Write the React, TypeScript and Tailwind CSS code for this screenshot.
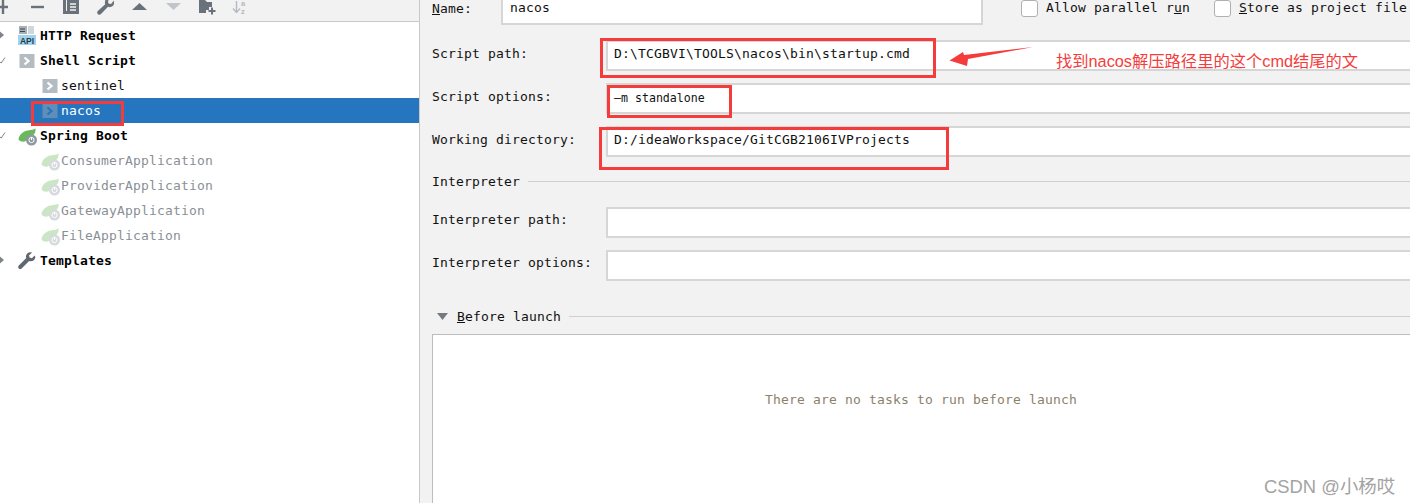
import type { ReactNode } from "react";

const mono = "font-['DejaVu_Sans_Mono',monospace] text-[13px] tracking-[0.17px]";

function ShellIcon({ selected }: { selected?: boolean }) {
  return (
    <svg width="16" height="16" viewBox="0 0 16 16" className="shrink-0">
      <rect x="0.5" y="1" width="15" height="14" fill={selected ? "#5f8fb8" : "#b4bcc2"} />
      <path d="M5.5 4.500 9.500 8 5.500 11.500" fill="none" stroke={selected ? "#2675bf" : "#ffffff"} strokeWidth="2.2" />
    </svg>
  );
}

function ApiIcon() {
  return (
    <svg width="18" height="20" viewBox="0 0 18 20" className="shrink-0">
      <rect x="1" y="0" width="8" height="8" fill="#a9b1b8" />
      <rect x="10" y="0" width="6" height="8" fill="#cfd6dc" />
      <path d="M2 3h5M2 5.500h5" stroke="#3d4750" strokeWidth="1" />
      <rect x="0" y="9" width="18" height="10" fill="#9ed4ee" />
      <text x="9" y="17.500" textAnchor="middle" fontSize="8.500" fontWeight="700" fill="#2a3b47" fontFamily="Liberation Sans">
        API
      </text>
    </svg>
  );
}

function SpringIcon({ faded }: { faded?: boolean }) {
  return (
    <svg width="20" height="20" viewBox="0 0 20 20" className="shrink-0" opacity={faded ? 0.35 : 1}>
      <path d="M0.5 13.500C1 9 5 5 10 4.500C13 4 16 3.500 17.500 2.500C18 6 16 10 13 10C10 11 8 15 7 15.500C4 16 1 15 0.500 13.500Z" fill="#6ab85c" />
      <circle cx="13.500" cy="14" r="5.500" fill="#8d98a1" />
      <circle cx="13.500" cy="14" r="2.600" fill="none" stroke="#ffffff" strokeWidth="1" />
      <path d="M13.500 11v3" stroke="#ffffff" strokeWidth="1" />
    </svg>
  );
}

function WrenchIcon({ size = 18, color = "#5f6870" }: { size?: number; color?: string }) {
  return (
    <svg width={size} height={size} viewBox="0 0 18 18" className="shrink-0">
      <path
        d="M16.800 3.400 13.800 6.200 11.600 5.600 11 3.400 14 .6C11.600-.3 9 .8 8.200 3.200 7.900 4.200 7.900 5.200 8.300 6.100L.8 13.600C0 14.400 0 15.600.8 16.400 1.600 17.200 2.800 17.200 3.600 16.400L11.100 8.900C13.600 9.900 16.300 8.600 17.100 6.200 17.400 5.300 17.300 4.200 16.800 3.400Z"
        fill={color}
      />
    </svg>
  );
}

function Toolbar() {
  return (
    <div className="h-[22px] shrink-0 border-b border-[#c9c9c9] bg-[#f2f2f2] overflow-hidden">
      <div className="flex h-[15px] items-start overflow-hidden">
        <svg width="8" height="15" viewBox="0 0 8 15" className="shrink-0">
          <path d="M0 7h8M3 0v14" stroke="#69727a" strokeWidth="2.4" />
        </svg>
        <svg width="13" height="15" viewBox="0 0 13 15" className="ml-[23px] shrink-0">
          <path d="M0 7h13" stroke="#69727a" strokeWidth="2.4" />
        </svg>
        <svg width="17" height="15" viewBox="0 0 17 15" className="ml-[19px] shrink-0">
          <path d="M0 0h3v11h3v3H0Z" fill="#69727a" />
          <rect x="4" y="0" width="12" height="14" fill="#69727a" />
          <path d="M7 4h6M7 7h6M7 10h6" stroke="#f2f2f2" strokeWidth="1.3" />
        </svg>
        <svg width="18" height="15" viewBox="0 0 18 15" className="ml-[17px] shrink-0">
          <path d="M17 0.500 14 4 11.500 3.500 11 1 13 -1.500H9.500C8 0 7.500 2 8.200 4.200L0.8 11C-.2 12 0 13.400 1 14.200 2 15 3.200 14.800 4 14L11 6.800C13.500 7.800 16.500 6.500 17 3.800Z" fill="#69727a" />
        </svg>
        <svg width="15" height="7" viewBox="0 0 15 7" className="ml-[17px] mt-[3px] shrink-0">
          <path d="M7.500 0 15 7H0Z" fill="#69727a" />
        </svg>
        <svg width="15" height="7" viewBox="0 0 15 7" className="ml-[19px] mt-[3px] shrink-0">
          <path d="M0 0H15L7.500 7Z" fill="#c1c5c9" />
        </svg>
        <svg width="19" height="15" viewBox="0 0 19 15" className="ml-[18px] shrink-0">
          <path d="M0 0h6l2 2h5v5h-3v3H7v3H0Z" fill="#69727a" />
          <path d="M13 7.500v7M9.500 11h7" stroke="#69727a" strokeWidth="2" />
        </svg>
        <svg width="18" height="15" viewBox="0 0 18 15" className="ml-[14px] shrink-0">
          <path d="M4.500 1v11M1 8.500l3.500 4 3.500-4" fill="none" stroke="#b5babf" strokeWidth="1.4" />
          <text x="9" y="5.500" fontSize="7.500" fill="#b5babf" fontFamily="Liberation Sans" fontWeight="700">a</text>
          <text x="9" y="13.500" fontSize="7.500" fill="#b5babf" fontFamily="Liberation Sans" fontWeight="700">z</text>
        </svg>
      </div>
    </div>
  );
}

function TreeRow({
  icon,
  label,
  bold,
  child,
  selected,
  faded,
  arrow,
}: {
  icon: ReactNode;
  label: string;
  bold?: boolean;
  child?: boolean;
  selected?: boolean;
  faded?: boolean;
  arrow?: "open" | "closed";
}) {
  return (
    <div className={`relative flex h-[25px] items-center ${child ? "pl-[42px]" : "pl-[18px]"} ${selected ? "bg-[#2675bf]" : ""}`}>
      {arrow === "closed" && (
        <svg width="6" height="8" viewBox="0 0 6 8" className="absolute left-0 top-[8px]">
          <path d="M0 0.500 4 4 0 7.500Z" fill="#7d858c" />
        </svg>
      )}
      {arrow === "open" && (
        <svg width="6" height="8" viewBox="0 0 6 8" className="absolute left-0 top-[8px]">
          <path d="M0 6 1.200 7 5 1.500" fill="none" stroke="#7d858c" strokeWidth="1" />
        </svg>
      )}
      <span className={`flex shrink-0 items-center ${child ? "w-[19px]" : "w-[22px]"} ${faded ? "-ml-[1px] w-[20px]" : ""}`}>{icon}</span>
      <span
        className={`${mono} ${bold ? "font-bold text-black" : ""} ${selected ? "text-white" : ""} ${faded ? "text-[#8a8f96]" : ""} ${!bold && !selected && !faded ? "text-[#111]" : ""}`}
      >
        {label}
      </span>
    </div>
  );
}

function Tree() {
  return (
    <div className="flex w-[420px] shrink-0 flex-col border-r border-[#c9c9c9] bg-white">
      <Toolbar />
      <div className="pt-[1px]">
        <TreeRow arrow="closed" icon={<ApiIcon />} label="HTTP Request" bold />
        <TreeRow arrow="open" icon={<span className="ml-px"><ShellIcon /></span>} label="Shell Script" bold />
        <TreeRow child icon={<ShellIcon />} label="sentinel" />
        <TreeRow child selected icon={<ShellIcon selected />} label="nacos" />
        <TreeRow arrow="open" icon={<SpringIcon />} label="Spring Boot" bold />
        <TreeRow child faded icon={<SpringIcon faded />} label="ConsumerApplication" />
        <TreeRow child faded icon={<SpringIcon faded />} label="ProviderApplication" />
        <TreeRow child faded icon={<SpringIcon faded />} label="GatewayApplication" />
        <TreeRow child faded icon={<SpringIcon faded />} label="FileApplication" />
        <TreeRow arrow="closed" icon={<WrenchIcon />} label="Templates" bold />
      </div>
    </div>
  );
}

function Field({ value, small }: { value?: string; small?: boolean }) {
  return (
    <div className="-mr-[4px] flex h-[31px] flex-1 items-center border-2 border-[#d6d6d6] bg-white pl-[6px]">
      <span className={small ? "font-['DejaVu_Sans_Mono',monospace] text-[11.6px] text-[#111] mt-[1px]" : `${mono} -mt-[4px] text-[#111]`}>{value}</span>
    </div>
  );
}

function FormRow({ label, value, small, mt }: { label: string; value?: string; small?: boolean; mt: string }) {
  return (
    <div className={`flex items-center ${mt}`}>
      <span className={`${mono} w-[174px] -mt-[4px] shrink-0 text-[#111]`}>{label}</span>
      <Field value={value} small={small} />
    </div>
  );
}

function Checkbox({ label }: { label: ReactNode }) {
  return (
    <div className="flex items-center gap-[8px]">
      <span className="h-[17px] w-[17px] rounded-[3px] border border-[#b0b0b0] bg-white" />
      <span className={`${mono} -mt-[1px] text-[#111]`}>{label}</span>
    </div>
  );
}

function Form() {
  return (
    <div className="min-w-0 flex-1 bg-[#f2f2f2] pl-[12px]">
      <div className="flex h-[25px] items-start">
        <span className={`${mono} w-[69px] shrink-0 -mt-[1px] text-[#111]`}>
          <u>N</u>ame:
        </span>
        <div className="flex h-[25px] w-[482px] shrink-0 items-start border-r-2 border-b-2 border-l-2 border-[#d6d6d6] bg-white pl-[7px]">
          <span className={`${mono} -mt-[2px] text-[#111]`}>nacos</span>
        </div>
        <div className="ml-[38px] -mt-[1px] flex gap-[24px]">
          <Checkbox label={<>Allow parallel r<u>u</u>n</>} />
          <Checkbox label={<><u>S</u>tore as project file</>} />
        </div>
      </div>
      <FormRow mt="mt-[15px]" label="Script path:" value="D:\TCGBVI\TOOLS\nacos\bin\startup.cmd" />
      <FormRow mt="mt-[12px]" label="Script options:" value="—m standalone" small />
      <FormRow mt="mt-[12px]" label="Working directory:" value="D:/ideaWorkspace/GitCGB2106IVProjects" />
      <div className="mt-[15px] flex items-center gap-[8px]">
        <span className={`${mono} text-[#111]`}>Interpreter</span>
        <div className="h-[1px] flex-1 bg-[#d0d0d0]" />
      </div>
      <FormRow mt="mt-[15px]" label="Interpreter path:" />
      <FormRow mt="mt-[12px]" label="Interpreter options:" />
      <div className="mt-[26px] flex items-center pl-[5px]">
        <svg width="11" height="7" viewBox="0 0 11 7" className="shrink-0">
          <path d="M0 0H11L5.500 7Z" fill="#737a80" />
        </svg>
        <span className={`${mono} ml-[9px] text-[#111]`}>
          <u>B</u>efore launch
        </span>
        <div className="ml-[8px] h-[1px] flex-1 bg-[#d0d0d0]" />
      </div>
      <div className="-mr-[4px] mt-[8px] flex h-[180px] items-start justify-center border border-[#bdbdbd] bg-white pr-[4px] pt-[55px]">
        <span className={`${mono} text-[#8c7f6d]`}>There are no tasks to run before launch</span>
      </div>
    </div>
  );
}

export default function App() {
  return (
    <div className="relative flex h-[503px] w-[1410px] overflow-hidden">
      <Tree />
      <Form />

      {/* annotations drawn on top of the screenshot */}
      <div className="absolute left-[31px] top-[101px] h-[25px] w-[93px] border-[3px] border-[#f53c3c]" />
      <div className="absolute left-[600px] top-[38px] h-[40px] w-[336px] border-[3px] border-[#f53c3c]" />
      <div className="absolute left-[607px] top-[85px] h-[33px] w-[125px] border-[3px] border-[#f53c3c]" />
      <div className="absolute left-[599px] top-[127px] h-[43px] w-[350px] border-[3px] border-[#f53c3c]" />
      <svg width="85" height="22" viewBox="0 0 85 22" className="absolute left-[949px] top-[46px]">
        <path d="M84 1 19 13 18 20 0.500 14.500 14 6 15 9Z" fill="#f53c3c" />
      </svg>
      <span className="absolute left-[1056px] top-[49px] font-['Liberation_Sans','Noto_Sans_CJK_SC',sans-serif] text-[16.3px] text-[#f53c3c]">
        找到nacos解压路径里的这个cmd结尾的文
      </span>
      <span className="absolute left-[1264px] top-[473px] font-['Liberation_Sans','Noto_Sans_CJK_SC',sans-serif] text-[18.4px] text-[#a3a3a3]">
        CSDN @小杨哎
      </span>
    </div>
  );
}
